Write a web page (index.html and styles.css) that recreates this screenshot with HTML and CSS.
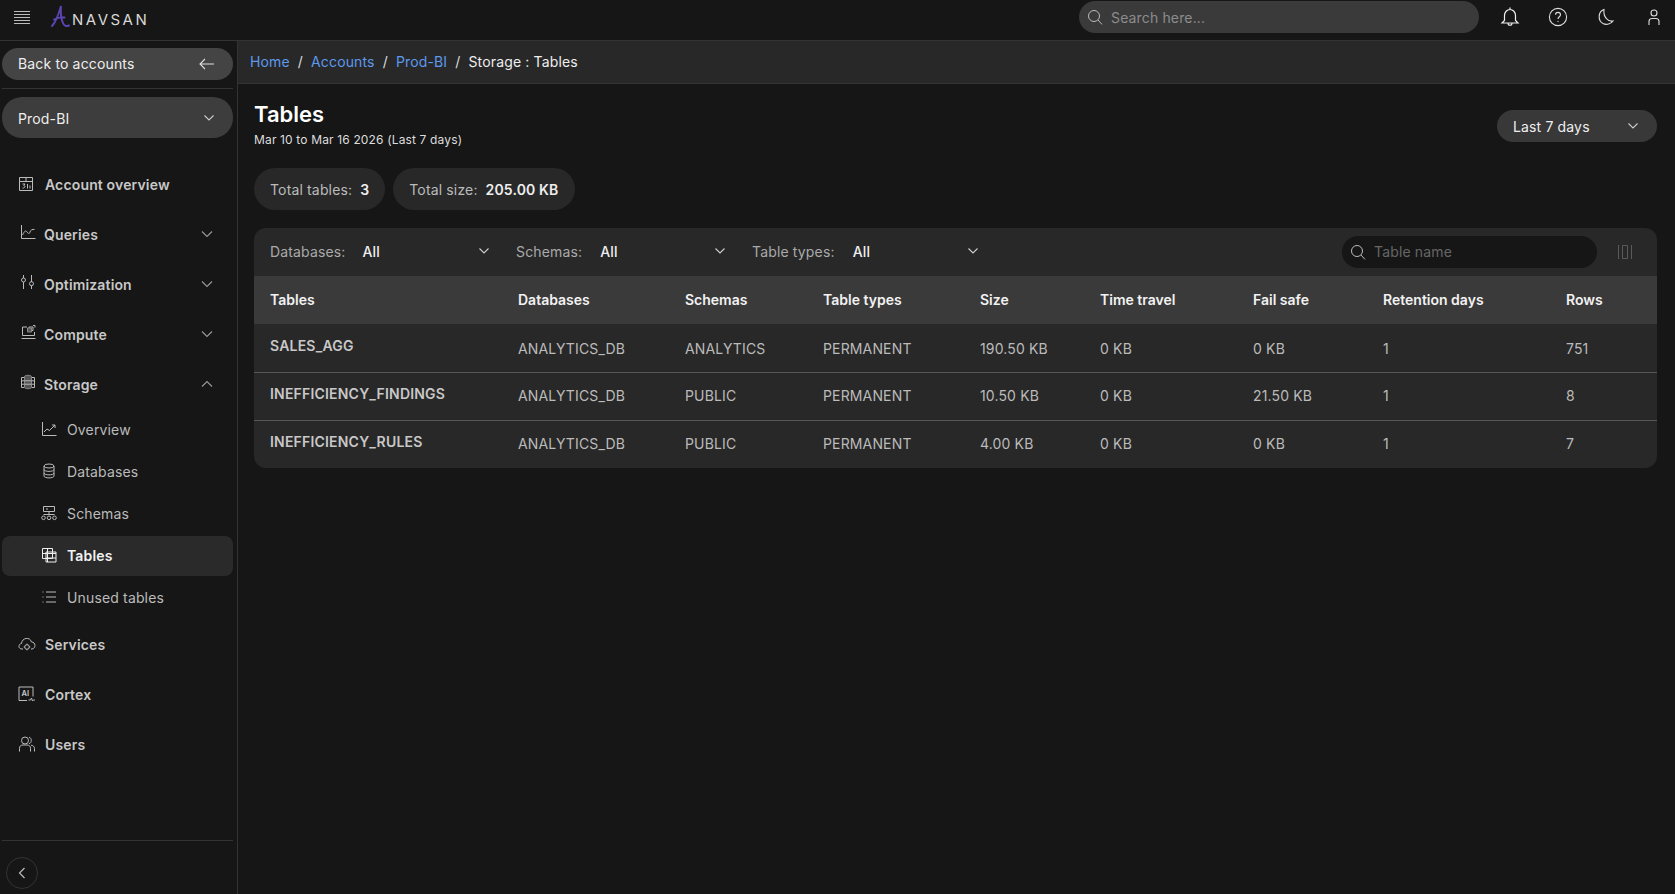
FILE: index.html
```html
<!DOCTYPE html>
<html lang="en">
<head>
<meta charset="utf-8">
<title>Tables</title>
<link rel="stylesheet" href="styles.css">
</head>
<body>
<header class="topbar">
  <div class="brand">
    <svg class="menu" width="16" height="13" viewBox="0 0 16 13"><path d="M0 .5h16M0 3.500h16M0 6.500h16M0 9.500h16M0 12.500h16" fill="none" stroke="#bbb" stroke-width="1"/></svg>
    <svg class="logo-a" width="20" height="24" viewBox="0 0 20 24"><path d="M2 22C6 18 9 9 11 2C10.500 9 11 15 13 19C14 22 16.500 22.500 19 21.500M4 15.500C7 14 11 13 14.500 13.500" fill="none" stroke="#5b45b5" stroke-width="1.900" stroke-linecap="round"/></svg>
    <span class="logo-text">NAVSAN</span>
  </div>
  <div class="top-right">
    <div class="search">
      <svg width="16" height="16" viewBox="0 0 16 16"><circle cx="7" cy="7" r="5.500" fill="none" stroke="#bbb"/><path d="M11 11l4 4.400" stroke="#bbb" fill="none"/></svg>
      <span>Search here...</span>
    </div>
    <div class="top-icons">
      <svg width="20" height="20" viewBox="0 0 20 20" fill="none" stroke="#eee" stroke-width="1.200"><path d="M10 .5v2M4.500 13.500V8.500a5.500 6 0 0 1 11 0v5l2.500 2.500H2z"/><path d="M8 16c0 3 4 3 4 0"/></svg>
      <svg width="20" height="20" viewBox="0 0 20 20" fill="none" stroke="#ddd" stroke-width="1.100"><circle cx="10" cy="10" r="8.600"/><path d="M7.500 7.800c0-3.200 5-3.200 5 0 0 2-2.500 2-2.500 4.200M10 14v1"/></svg>
      <svg width="20" height="20" viewBox="0 0 20 20" fill="none" stroke="#ddd" stroke-width="1.100"><path d="M8 2.500c-6 2-6.500 11-1 14 3.500 1.800 8 .5 10-2.500-5 1-10-4-9-11.500z"/></svg>
      <svg width="20" height="20" viewBox="0 0 20 20" fill="none" stroke="#ddd" stroke-width="1.100"><circle cx="10" cy="6" r="3"/><path d="M5 18v-3.500a3 3 0 0 1 3-3h4a3 3 0 0 1 3 3V18"/></svg>
    </div>
  </div>
</header>
<div class="shell">
  <aside class="sidebar">
    <div class="back"><span>Back to accounts</span>
      <svg width="16" height="12" viewBox="0 0 16 12" fill="none" stroke="#ddd" stroke-width="1.100"><path d="M15 6H1M6 1L1 6l5 5"/></svg>
    </div>
    <div class="rule"></div>
    <div class="account"><span>Prod-BI</span>
      <svg class="chev" width="12" height="8" viewBox="0 0 12 8"><path d="M1.500 1.500L6 6l4.500-4.500"/></svg>
    </div>
    <nav class="nav">
      <a class="item solo"><svg width="18" height="16" viewBox="0 0 18 16"><path d="M1.500 1.500h13v13h-13zM1.500 5.500h13M8 1.500v4M4.500 8h2.500l-1.200 1.500c1.700 0 1.700 2.800-1.300 2.500M9.500 8v4.500M12 9.500v3"/></svg><span>Account overview</span></a>
      <a class="item"><svg width="16" height="16" viewBox="0 0 16 16"><path d="M1.500 1v13.500h14M2.500 11c2-4 3-5 4.500-3s2.500 2 3 0 2.500-3 4.500-2.500"/></svg><span>Queries</span><svg class="chev" width="12" height="8" viewBox="0 0 12 8"><path d="M1 1.500L6 6.500l5-5"/></svg></a>
      <a class="item"><svg width="16" height="16" viewBox="0 0 16 16"><path d="M3.500 1v3M3.500 8v7M11.500 1v7M11.500 11.500v3.500"/><circle cx="3.500" cy="6" r="2"/><circle cx="11.500" cy="9.700" r="2"/></svg><span>Optimization</span><svg class="chev" width="12" height="8" viewBox="0 0 12 8"><path d="M1 1.500L6 6.500l5-5"/></svg></a>
      <a class="item"><svg width="16" height="16" viewBox="0 0 16 16"><path d="M7 3H2.500v8.500h12V8M1.500 14.500h14M9 6.500V3h4v3.500zM13 1.500h2v2"/><path class="fill" d="M7.500 4h4v4h-4z"/></svg><span>Compute</span><svg class="chev" width="12" height="8" viewBox="0 0 12 8"><path d="M1 1.500L6 6.500l5-5"/></svg></a>
      <a class="item"><svg width="16" height="16" viewBox="0 0 16 16"><path d="M4 3.500H1.500v10H4M12 3.500h2.500v10H12M1.500 6.800H4M1.500 10.200H4M12 6.800h2.500M12 10.200h2.500"/><path class="fill" d="M4.500 2.500c0-1.600 7-1.600 7 0v11c0 1.600-7 1.600-7 0z"/><path d="M4.500 6.800h7M4.500 10.200h7"/></svg><span>Storage</span><svg class="chev" width="12" height="8" viewBox="0 0 12 8"><path d="M1 6.500L6 1.500l5 5"/></svg></a>
      <div class="subnav">
        <a class="sub"><svg width="16" height="16" viewBox="0 0 16 16"><path d="M1.500 1v13.500h14M3 11l3-3 2.500 1.500L14 4M11 4h3v3"/></svg><span>Overview</span></a>
        <a class="sub"><svg width="16" height="16" viewBox="0 0 16 16"><ellipse cx="8" cy="3" rx="5" ry="2"/><path d="M3 3v10c0 2.500 10 2.500 10 0V3M3 6.500c0 2.500 10 2.500 10 0M3 10c0 2.500 10 2.500 10 0"/></svg><span>Databases</span></a>
        <a class="sub"><svg width="16" height="16" viewBox="0 0 16 16"><path d="M2.500 1.500h11v5h-11zM5 4h2M8 6.500v3M2.500 9.500h11"/><circle cx="2.500" cy="12.800" r="1.800"/><circle cx="8" cy="12.800" r="1.800"/><circle cx="13.500" cy="12.800" r="1.800"/></svg><span>Schemas</span></a>
        <a class="sub active"><svg width="16" height="16" viewBox="0 0 16 16"><path d="M1.500 1.500h10v10h-10zM5 5h10v10H5zM1.500 6.500h13.500M6.500 1.500v13.500M5 11h10"/></svg><span>Tables</span></a>
        <a class="sub"><svg width="16" height="16" viewBox="0 0 16 16"><path d="M5 3h10M5 8h10M5 13h10M1.500 3h1M1.500 8h1M1.500 13h1"/></svg><span>Unused tables</span></a>
      </div>
      <a class="item solo"><svg width="18" height="16" viewBox="0 0 18 16"><path d="M5 13H4C0 13 0 8 3.500 7.500 4 1.500 12 .5 13.500 6 18 6 18 12.500 14 13h-1"/><circle cx="9" cy="11" r="2.300"/><path d="M9 7.700v1M9 13.300v1M5.700 11h1M11.300 11h1"/></svg><span>Services</span></a>
      <a class="item solo"><svg width="18" height="16" viewBox="0 0 18 16"><path d="M9 14.500H1V1h14v9.500"/><text class="ai" x="3.500" y="9.500">AI</text><path d="M10.500 14h2l1-2 1 3 1-1h1.500"/></svg><span>Cortex</span></a>
      <a class="item solo"><svg width="18" height="16" viewBox="0 0 18 16"><circle cx="7" cy="4.500" r="3.500"/><path d="M1.500 15.500v-3C1.500 10 3 9 5 9h4c2 0 3.500 1 3.500 3.500v3M11 1.200c3 .5 3 6 0 6.500M13 9.200c2 .3 3.500 1.300 3.500 3.300v3"/></svg><span>Users</span></a>
    </nav>
    <div class="side-foot">
      <button class="collapse" type="button"><svg width="8" height="12" viewBox="0 0 8 12" fill="none" stroke="#bbb" stroke-width="1.200"><path d="M6.500 1L1.500 6l5 5"/></svg></button>
    </div>
  </aside>
  <main class="main">
    <div class="crumbs">
      <a>Home</a><i>/</i><a>Accounts</a><i>/</i><a>Prod-BI</a><i>/</i><b>Storage : Tables</b>
    </div>
    <div class="content">
      <div class="head">
        <div>
          <h1>Tables</h1>
          <p>Mar 10 to Mar 16 2026 (Last 7 days)</p>
        </div>
        <div class="range"><span>Last 7 days</span><svg class="chev" width="12" height="8" viewBox="0 0 12 8"><path d="M1.500 1.500L6 6l4.500-4.500"/></svg></div>
      </div>
      <div class="chips">
        <div class="chip"><span>Total tables:</span><b>3</b></div>
        <div class="chip"><span>Total size:</span><b>205.00 KB</b></div>
      </div>
      <section class="card">
        <div class="filters">
          <div class="filter f1"><span>Databases:</span><b>All</b><svg class="chev" width="12" height="8" viewBox="0 0 12 8"><path d="M1.500 1.500L6 6l4.500-4.500"/></svg></div>
          <div class="filter f2"><span>Schemas:</span><b>All</b><svg class="chev" width="12" height="8" viewBox="0 0 12 8"><path d="M1.500 1.500L6 6l4.500-4.500"/></svg></div>
          <div class="filter f3"><span>Table types:</span><b>All</b><svg class="chev" width="12" height="8" viewBox="0 0 12 8"><path d="M1.500 1.500L6 6l4.500-4.500"/></svg></div>
          <div class="table-search">
            <svg width="16" height="16" viewBox="0 0 16 16"><circle cx="7" cy="7" r="5.500" fill="none" stroke="#bbb"/><path d="M11 11l4 4.400" stroke="#bbb" fill="none"/></svg>
            <span>Table name</span>
          </div>
          <svg class="cols" width="14" height="14" viewBox="0 0 14 14" fill="none" stroke="#5a5a5a"><path d="M.5 0v14M13.500 0v14M4.500 .5h5v13h-5z"/></svg>
        </div>
        <div class="row header"><span>Tables</span><span>Databases</span><span>Schemas</span><span>Table types</span><span>Size</span><span>Time travel</span><span>Fail safe</span><span>Retention days</span><span>Rows</span></div>
        <div class="row"><strong>SALES_AGG</strong><span>ANALYTICS_DB</span><span>ANALYTICS</span><span>PERMANENT</span><span>190.50 KB</span><span>0 KB</span><span>0 KB</span><span>1</span><span>751</span></div>
        <div class="row ruled"><strong>INEFFICIENCY_FINDINGS</strong><span>ANALYTICS_DB</span><span>PUBLIC</span><span>PERMANENT</span><span>10.50 KB</span><span>0 KB</span><span>21.50 KB</span><span>1</span><span>8</span></div>
        <div class="row ruled"><strong>INEFFICIENCY_RULES</strong><span>ANALYTICS_DB</span><span>PUBLIC</span><span>PERMANENT</span><span>4.00 KB</span><span>0 KB</span><span>0 KB</span><span>1</span><span>7</span></div>
      </section>
    </div>
  </main>
</div>
</body>
</html>
```
FILE: styles.css
```css
* { box-sizing: border-box; }
html, body { margin: 0; height: 100%; }
body {
  background: #161616;
  color: #eee;
  font-family: Inter, "Liberation Sans", sans-serif;
  font-size: 14px;
  letter-spacing: 0.15px;
  overflow: hidden;
}
.topbar {
  height: 41px;
  display: flex;
  align-items: center;
  justify-content: space-between;
  border-bottom: 1px solid #333;
  padding-bottom: 6px;
}
.brand { display: flex; align-items: center; padding-left: 14px; }
.menu { margin-right: 20px; }
.logo-a { margin-top: -2px; }
.logo-text { color: #d8d8d8; font-size: 15px; letter-spacing: 2.500px; margin-left: 2px; margin-top: 5px; }
.top-right { display: flex; align-items: center; padding-right: 11px; }
.search {
  width: 400px; height: 32px;
  background: #3a3a3a;
  border-radius: 16px;
  display: flex; align-items: center; gap: 8px;
  padding-left: 8px;
  color: #8c8c8c;
}
.top-icons { display: flex; align-items: center; gap: 28px; margin-left: 21px; }
.shell { display: flex; height: 853px; }
.sidebar {
  width: 238px;
  flex: none;
  border-right: 1px solid #333;
  padding: 7px 4px 0 2px;
  display: flex;
  flex-direction: column;
}
.back {
  height: 32px; border-radius: 16px; background: #444;
  display: flex; align-items: center; justify-content: space-between;
  padding: 0 18px 1px 16px; color: #eee;
}
.rule { height: 1px; background: #333; margin: 8px 0; }
.account {
  height: 41px; border-radius: 20px; background: #3d3d3d;
  display: flex; align-items: center; justify-content: space-between;
  padding: 1px 18px 0 16px; color: #eee;
}
.chev { fill: none; stroke: #ccc; stroke-width: 1.1; flex: none; }
.nav { flex: 1; padding-top: 21px; }
.nav svg:not(.chev) { fill: none; stroke: #bbb; stroke-width: 1; flex: none; }
.nav svg .fill { fill: #555; stroke: #888; }
.nav svg .ai { fill: #ccc; stroke: none; font-size: 7.5px; font-weight: 600; letter-spacing: 0; }
.item {
  height: 50px; display: flex; align-items: center;
  padding: 0 20px 0 18px; gap: 8px;
  color: #c8c8c8; font-weight: 600;
}
.item:not(.solo) svg:first-child { margin-top: -4px; }
.item.solo { gap: 9px; padding-left: 16px; }
.item .chev { margin-left: auto; stroke: #999; }
.subnav { display: flex; flex-direction: column; margin-top: -1px; margin-bottom: 1px; }
.sub {
  height: 42px; display: flex; align-items: center; gap: 10px;
  padding-left: 39px; color: #bbb;
}
.sub.active {
  height: 40px; margin: 2px 0 0; padding-bottom: 2px; border-radius: 8px; background: #2a2a2a;
  color: #f2f2f2; font-weight: 600;
}
.nav .sub.active svg { stroke: #eee; }
.side-foot {
  height: 54px; border-top: 1px solid #333;
  padding: 16px 0 0 4px;
  flex: none;
}
.collapse {
  width: 32px; height: 32px; border-radius: 50%;
  background: none; border: 1px solid #333;
  display: flex; align-items: center; justify-content: center; padding: 0;
}
.main { flex: 1; min-width: 0; }
.crumbs {
  height: 43px; background: #282828; border-bottom: 1px solid #333;
  display: flex; align-items: center; padding: 0 0 2px 12px; color: #ddd;
}
.crumbs a { color: #5d99ee; }
.crumbs i { font-style: normal; margin: 0 8px; }
.crumbs b { font-weight: 400; color: #eee; }
.content { padding: 0 18px 0 16px; }
.head { display: flex; justify-content: space-between; padding-top: 17px; height: 84px; }
.head h1 { margin: 0; font-size: 22px; font-weight: 600; color: #fff; line-height: 26px; letter-spacing: 0; }
.head p { margin: 5px 0 0; font-size: 12px; color: #ddd; line-height: 16px; }
.range {
  width: 160px; height: 32px; margin-top: 9px; border-radius: 16px;
  background: #383838;
  display: flex; align-items: center; justify-content: space-between;
  padding: 0 18px 0 16px; color: #eee;
}
.chips { display: flex; gap: 8px; }
.chip {
  height: 42px; border-radius: 21px; background: #282828;
  display: flex; align-items: center; gap: 8px; padding: 0 16px;
  color: #bbb;
}
.chip b { color: #eee; font-weight: 600; }
.card {
  margin-top: 18px; background: #282828; border-radius: 12px; overflow: hidden;
}
.filters { height: 48px; display: flex; align-items: center; padding-left: 16px; }
.filter { display: flex; align-items: center; color: #aaa; padding-bottom: 2px; }
.filter b { color: #eee; font-weight: 500; }
.f1 { width: 246px; }
.f2 { width: 236px; }
.f3 { width: 253px; }
.f1 b { margin-left: 17px; }
.f2 b { margin-left: 18px; }
.f3 b { margin-left: 18px; }
.filter .chev { margin-left: auto; margin-right: 26px; }
.table-search {
  margin-left: auto;
  width: 255px; height: 32px; border-radius: 16px; background: #161616;
  display: flex; align-items: center; gap: 8px; padding: 0 0 1px 8px; color: #666;
}
.cols { margin: 0 25px 0 21px; }
.row {
  height: 48px; display: grid;
  grid-template-columns: 248px 167px 138px 157px 120px 153px 130px 183px 1fr;
  align-items: center; padding-left: 16px;
  color: #bbb;
}
.row.header { background: #3a3a3a; color: #f2f2f2; font-weight: 600; letter-spacing: 0; padding-bottom: 2px; }
.row.ruled { border-top: 1px solid #555; padding-bottom: 2px; }
.row strong { font-weight: 600; color: #c8c8c8; margin-top: -4px; letter-spacing: 0.2px; }
.header + .row strong { margin-top: -6px; }
```
